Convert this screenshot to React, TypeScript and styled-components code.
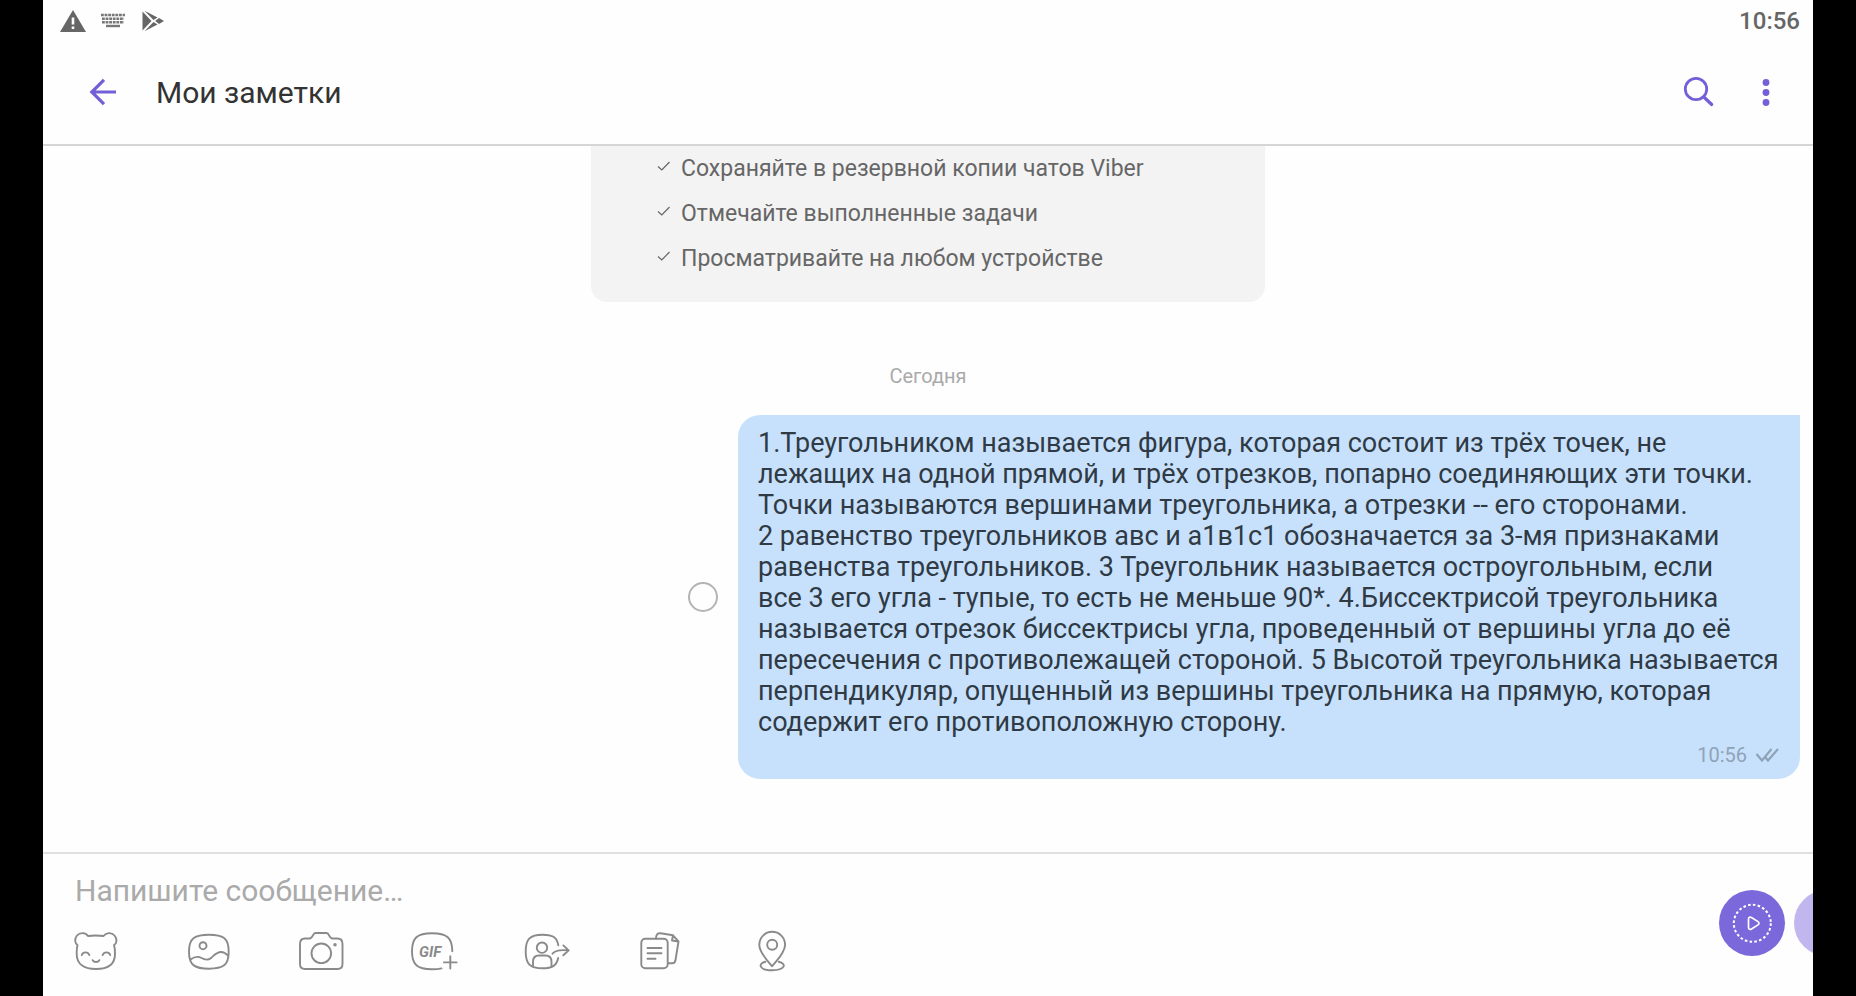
import React from "react";
import styled, { createGlobalStyle } from "styled-components";

const GlobalStyle = createGlobalStyle`
  *, *::before, *::after { box-sizing: border-box; }
  body {
    margin: 0;
    background: #000;
    font-family: Roboto, "Noto Sans", sans-serif;
  }
  button { border: 0; padding: 0; background: none; cursor: pointer; }
  svg { display: block; }
`;

const Screen = styled.div`
  display: flex;
  flex-direction: column;
  min-height: 100vh;
  margin: 0 43px;
  background: #fefefe;
  overflow: hidden;
`;

const StatusBar = styled.div`
  display: flex;
  justify-content: space-between;
  align-items: center;
  height: 40px;
  padding: 1px 13px 0 16px;
  color: #666;
`;

const StatusIcons = styled.div`
  display: flex;
  align-items: center;
  gap: 14px;
`;

const Clock = styled.time`
  font-size: 24px;
  font-weight: 500;
  line-height: 28px;
`;

const Header = styled.header`
  display: flex;
  align-items: center;
  height: 106px;
  padding: 2px 30px 0 43px;
  border-bottom: 2px solid #d6d6d6;
  color: #7360d8;
`;

const IconButton = styled.button`
  display: flex;
  align-items: center;
  justify-content: center;
  width: 34px;
  height: 34px;
  color: inherit;
`;

const Title = styled.h1`
  flex: 1;
  margin: 0 0 0 36px;
  font-size: 30px;
  font-weight: 400;
  line-height: 36px;
  color: #333;
`;

const HeaderActions = styled.div`
  display: flex;
  gap: 33px;
`;

const Chat = styled.main`
  flex: 1;
  display: flex;
  flex-direction: column;
`;

const IntroCard = styled.ul`
  align-self: center;
  width: 674px;
  max-width: 100%;
  margin: 0;
  padding: 0 64px 21px 66px;
  list-style: none;
  border-radius: 0 0 16px 16px;
  background: #f3f3f3;
`;

const IntroItem = styled.li`
  display: flex;
  align-items: center;
  gap: 10px;
  font-size: 23px;
  line-height: 45px;
  color: #666;
`;

const DateLabel = styled.div`
  margin: 62px 0 27px;
  text-align: center;
  font-size: 20px;
  line-height: 24px;
  color: #aaa;
`;

const MessageRow = styled.div`
  display: flex;
  justify-content: flex-end;
  align-items: center;
  gap: 20px;
  padding-bottom: 73px;
`;

const SelectBox = styled.input`
  appearance: none;
  flex: none;
  width: 30px;
  height: 30px;
  margin: 0;
  border: 2px solid #b4b4b4;
  border-radius: 50%;
  background: #fefefe;
`;

const Bubble = styled.article`
  width: 60%;
  margin-right: 13px;
  padding: 13px 20px 12px;
  border-radius: 22px 0 22px 22px;
  background: #c7e1fd;
`;

const MessageText = styled.p`
  margin: 0;
  font-size: 27px;
  line-height: 31px;
  white-space: pre-line;
  color: #2f3a44;
`;

const MessageMeta = styled.div`
  display: flex;
  justify-content: flex-end;
  align-items: center;
  gap: 8px;
  padding-top: 5px;
  font-size: 20px;
  line-height: 24px;
  color: #8fa3b7;
`;

const Composer = styled.footer`
  display: flex;
  align-items: center;
  justify-content: space-between;
  height: 144px;
  padding-bottom: 4px;
  border-top: 2px solid #e0e0e0;
`;

const ComposerMain = styled.div`
  flex: 1;
  display: flex;
  flex-direction: column;
  gap: 16px;
  padding-left: 29px;
`;

const MessageInput = styled.input`
  width: 100%;
  height: 40px;
  padding: 0 3px;
  border: 0;
  outline: 0;
  background: transparent;
  font: 400 30px/40px Roboto, "Noto Sans", sans-serif;
  color: #333;
  &::placeholder { color: #aaa; opacity: 1; }
`;

const Attachments = styled.div`
  display: flex;
  gap: 65px;
  color: #8a8a8a;
`;

const AttachButton = styled.button`
  width: 48px;
  height: 48px;
  color: inherit;
`;

const RecordStrip = styled.div`
  display: flex;
  gap: 9px;
  width: 94px;
  overflow: hidden;
`;

const RecordButton = styled.button<{ $faded?: boolean }>`
  flex: none;
  width: 66px;
  height: 66px;
  border-radius: 50%;
  background: ${(p) => (p.$faded ? "#c1b7ee" : "#7b68da")};
`;

const Stroke = ({ children }: { children: React.ReactNode }) => (
  <svg width="48" height="48" viewBox="0 0 48 48" fill="none" stroke="currentColor" strokeWidth="1.9" strokeLinecap="round" strokeLinejoin="round">
    {children}
  </svg>
);

const attachments = [
  {
    label: "Стикеры",
    icon: (
      <>
        <path d="M16 9C14 5.5 8 5 5 8.5C2 12 3 16.5 5.5 18C4.6 21 4.7 24 4.7 27C4.7 37 12 42 24 42S43 37 43 27C43 24 43 21 42 18C45 16.5 45.5 12 42.5 8.5C39.5 5 34 5.5 31.5 9C27 8.4 20.5 8.4 16 9Z" />
        <path d="M9.8 28C11 24.5 16 24.5 17.3 28M30.7 28C32 24.5 37 24.5 38.2 28M20.7 33.2C22 35.6 26 35.6 27.3 33.2" />
      </>
    ),
  },
  {
    label: "Галерея",
    icon: (
      <>
        <path d="M24 7.7C38 7.7 43.7 11 43.7 24.7S38 41.7 24 41.7S4 38.5 4 24.7S10 7.7 24 7.7Z" />
        <circle cx="18" cy="18.7" r="3.5" />
        <path d="M5.5 32.5C9 30 13 29 16.5 31C20 33 23 33.5 26 31C30 27.5 32 25 36 25C39 25 41 26.5 43 28.5" />
      </>
    ),
  },
  {
    label: "Камера",
    icon: (
      <>
        <path d="M7 11.5H11.5C15 11.5 14.5 6 17.5 6H28.5C31.5 6 31 11.5 34.5 11.5H39.5Q44.5 11.5 44.5 17V37Q44.5 42 39.5 42H7Q2 42 2 37V17Q2 11.5 7 11.5Z" />
        <circle cx="23.3" cy="26.3" r="9.8" />
        <circle cx="37" cy="17.8" r="0.8" fill="currentColor" />
      </>
    ),
  },
  {
    label: "GIF",
    icon: (
      <>
        <path d="M41.3 24.3C41.3 11 36 6.3 21 6.3S1 11 1 24.3S6 42.3 21 42.3C25 42.3 28 42.1 30.5 41.4M39.3 29.2V41.6M33 35.4H45.6" />
        <text x="8" y="30" fontSize="15" fontWeight="700" fontStyle="italic" fontFamily="Roboto, sans-serif" fill="currentColor" stroke="none">GIF</text>
      </>
    ),
  },
  {
    label: "Контакт",
    icon: (
      <>
        <path d="M34.3 18.3C33 10.5 29 7.7 18.5 7.7C6 7.7 1.7 12 1.7 24.5S6 41.3 18.5 41.3C28 41.3 32.5 39 34.2 31" />
        <circle cx="18" cy="20.7" r="5.2" />
        <path d="M9 39.5V35C9 30.5 11 28.5 15 28.5H21.5C25.5 28.5 27.5 30.5 27.5 35V39.5M28.5 26.7C31 23.5 36 22.5 44.5 23.4M39.3 18.4L44.7 23.4L39.3 28.3" />
      </>
    ),
  },
  {
    label: "Файл",
    icon: (
      <>
        <rect x="4.3" y="11.7" width="26.4" height="29.6" rx="4" />
        <path d="M10.5 21H24.5M10.5 26.3H24.5M10.5 31.7H18.5M19 11.5C19 7.5 20.5 6 23.5 6.3L36 8.3L41.5 14.5L38.5 33Q38 36.5 35 36.3H31.2M36 8.3L35 13.5L41.5 14.5" />
      </>
    ),
  },
  {
    label: "Геопозиция",
    icon: (
      <>
        <path d="M22 39.3C18 34 9.3 26 9.3 17.7A12.9 12.9 0 0 1 35.1 17.7C35.1 26 26 34 22 39.3Z" />
        <circle cx="22.2" cy="17.7" r="5" />
        <path d="M15.5 34.7C7.5 36.5 9 43.3 22.2 43.3S37 36.5 28.7 34.7" />
      </>
    ),
  },
];

const features = [
  "Сохраняйте в резервной копии чатов Viber",
  "Отмечайте выполненные задачи",
  "Просматривайте на любом устройстве",
];

const message = `1.Треугольником называется фигура, которая состоит из трёх точек, не
лежащих на одной прямой, и трёх отрезков, попарно соединяющих эти точки.
Точки называются вершинами треугольника, а отрезки -- его сторонами.
2 равенство треугольников авс и а1в1с1 обозначается за 3-мя признаками
равенства треугольников. 3 Треугольник называется остроугольным, если
все 3 его угла - тупые, то есть не меньше 90*. 4.Биссектрисой треугольника
называется отрезок биссектрисы угла, проведенный от вершины угла до её
пересечения с противолежащей стороной. 5 Высотой треугольника называется
перпендикуляр, опущенный из вершины треугольника на прямую, которая
содержит его противоположную сторону.`;

export default function App() {
  return (
    <>
      <GlobalStyle />
      <Screen>
        <StatusBar>
          <StatusIcons>
            <svg width="28" height="24" viewBox="0 0 28 24">
              <path d="M14 1L27 23H1Z" fill="#666" />
              <path d="M14 8.5V15.5M14 17.5V20" stroke="#fefefe" strokeWidth="2.6" />
            </svg>
            <svg width="26" height="16" viewBox="0 0 26 16" stroke="#777" strokeWidth="2.4" fill="none">
              <path d="M0 2H24M1 5.7H23M1 9.3H23" strokeDasharray="2.8 0.8" />
              <path d="M5 13H19" />
            </svg>
            <svg width="24" height="22" viewBox="0 0 24 22" fill="#666">
              <path d="M1.5 1.5L10.5 11L1.5 20.5Z" />
              <path d="M3.5 .8L16.5 7.5L12.5 10ZM3.5 21.2L16.5 14.5L12.5 12Z" />
              <path d="M18 8L23 11L18 14L14.2 11Z" />
            </svg>
          </StatusIcons>
          <Clock>10:56</Clock>
        </StatusBar>
        <Header>
          <IconButton aria-label="Назад">
            <svg width="34" height="34" viewBox="0 0 34 34" fill="none" stroke="currentColor" strokeWidth="3.2">
              <path d="M30 16H6M18 3.8L5.8 16L18 28.2" />
            </svg>
          </IconButton>
          <Title>Мои заметки</Title>
          <HeaderActions>
            <IconButton aria-label="Поиск">
              <svg width="34" height="34" viewBox="0 0 34 34" fill="none" stroke="currentColor" strokeWidth="2.8" strokeLinecap="round">
                <circle cx="14" cy="13" r="10.7" />
                <path d="M21.8 21L29.7 28.5" strokeWidth="3.2" />
              </svg>
            </IconButton>
            <IconButton aria-label="Меню">
              <svg width="34" height="34" viewBox="0 0 34 34" fill="currentColor">
                <circle cx="17" cy="6.5" r="3.4" />
                <circle cx="17" cy="16.5" r="3.4" />
                <circle cx="17" cy="26.5" r="3.4" />
              </svg>
            </IconButton>
          </HeaderActions>
        </Header>
        <Chat>
          <IntroCard>
            {features.map((f) => (
              <IntroItem key={f}>
                <svg width="14" height="16" viewBox="0 0 14 16" fill="none" stroke="#666" strokeWidth="1.2">
                  <path d="M1 5.5L4.8 9L12.5 1" />
                </svg>
                {f}
              </IntroItem>
            ))}
          </IntroCard>
          <DateLabel>Сегодня</DateLabel>
          <MessageRow>
            <SelectBox type="checkbox" aria-label="Отметить заметку" />
            <Bubble>
              <MessageText>{message}</MessageText>
              <MessageMeta>
                <time>10:56</time>
                <svg width="25" height="16" viewBox="0 0 25 16" fill="none" stroke="currentColor" strokeWidth="2.2">
                  <path d="M1.5 7L7 13.5L16.5 2M10.5 10.5L13 13.5L23 2" />
                </svg>
              </MessageMeta>
            </Bubble>
          </MessageRow>
        </Chat>
        <Composer>
          <ComposerMain>
            <MessageInput type="text" aria-label="Сообщение" placeholder="Напишите сообщение…" />
            <Attachments>
              {attachments.map((a) => (
                <AttachButton key={a.label} aria-label={a.label}>
                  <Stroke>{a.icon}</Stroke>
                </AttachButton>
              ))}
            </Attachments>
          </ComposerMain>
          <RecordStrip>
            <RecordButton aria-label="Записать видео">
              <svg width="66" height="66" viewBox="0 0 66 66" fill="none" stroke="#fff">
                <circle cx="33.3" cy="33.3" r="18.5" strokeWidth="2" strokeDasharray="2.6 2.243" />
                <path d="M29.5 29C29.5 27 31 26.6 32.5 27.5L39 31.6C40.3 32.5 40.3 34 39 34.9L32.5 39C31 39.9 29.5 39.4 29.5 37.5Z" strokeWidth="1.7" />
              </svg>
            </RecordButton>
            <RecordButton $faded aria-label="Записать голос" />
          </RecordStrip>
        </Composer>
      </Screen>
    </>
  );
}
